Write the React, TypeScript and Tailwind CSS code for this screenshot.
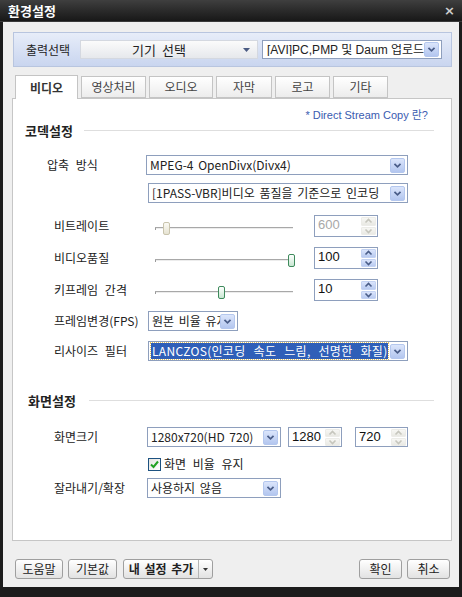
import React from "react";

const KR = "font-['Noto_Sans_CJK_KR',sans-serif]";
const LAT = "font-['Liberation_Sans','Noto_Sans_CJK_KR',sans-serif]";

function Chevron() {
  return (
    <svg width="15" height="15" viewBox="0 0 15 15">
      <polyline points="4,5.5 7.5,9 11,5.5" fill="none" stroke="#4a5d88" strokeWidth="2" />
    </svg>
  );
}

function ArrowBtn() {
  return (
    <div className="w-[15px] h-[15px] mr-[2px] shrink-0 rounded-[2px] border border-[#b4c7ee] bg-linear-to-b from-[#dbe5fb] to-[#b3c6ef] flex items-center justify-center">
      <Chevron />
    </div>
  );
}

function Select({ w, text, highlight, className = "" }: { w: string; text: string; highlight?: boolean; className?: string }) {
  return (
    <div className={`${w} h-[20px] border border-[#8e9fbd] bg-white flex items-center shrink-0 ${className}`}>
      <div className="flex-1 overflow-hidden whitespace-nowrap pl-[2px] pr-[2px] flex items-center h-full [word-spacing:2px]">
        {highlight ? (
          <span className="bg-[#2f5fb8] text-white px-[1px] h-[16px] flex items-center outline outline-1 outline-dotted outline-[#e0c060] overflow-hidden whitespace-nowrap w-[240px] [word-spacing:5px] tracking-[0.3px]">
            {text}
          </span>
        ) : (
          <span className="pl-[1px]">{text}</span>
        )}
      </div>
      <ArrowBtn />
    </div>
  );
}

function SpinArrow({ up, disabled }: { up?: boolean; disabled?: boolean }) {
  return (
    <div
      className={`flex-1 rounded-[1px] flex items-center justify-center ${
        disabled ? "bg-linear-to-b from-[#f7f7f4] to-[#e9e9e4] border border-[#ecece8]" : "bg-linear-to-b from-[#dae4fb] to-[#b9cbf1] border border-[#c3d2f2]"
      }`}
    >
      <svg width="9" height="6" viewBox="0 0 9 6">
        <polyline
          points={up ? "1.5,4.5 4.5,1.5 7.5,4.5" : "1.5,1.5 4.5,4.5 7.5,1.5"}
          fill="none"
          stroke={disabled ? "#c6c6bd" : "#4a5d88"}
          strokeWidth="1.6"
        />
      </svg>
    </div>
  );
}

function Spin({ w, value, disabled, arrowsDisabled, className = "" }: { w: string; value: string; disabled?: boolean; arrowsDisabled?: boolean; className?: string }) {
  const ad = disabled || arrowsDisabled;
  return (
    <div className={`${w} h-full border border-[#8e9fbd] bg-white flex shrink-0 ${className}`}>
      <div className={`flex-1 pl-[3px] pt-[2px] text-[13px] ${LAT} ${disabled ? "text-[#a8a8a8]" : "text-[#111]"}`}>{value}</div>
      <div className="w-[15px] flex flex-col gap-[1px] py-[1px] mr-[1px]">
        <SpinArrow up disabled={ad} />
        <SpinArrow disabled={ad} />
      </div>
    </div>
  );
}

function Slider({ pos, disabled }: { pos: string; disabled?: boolean }) {
  return (
    <div className="relative w-[138px] h-full ml-[8px] shrink-0">
      <div className="absolute left-0 right-0 top-[12px] h-[1px] bg-[#a8a8a8]" />
      <div className="absolute left-0 right-0 top-[13px] h-[1px] bg-[#ececec]" />
      <div className="absolute left-0 top-[13px] w-[1px] h-[2px] bg-[#9a9a9a]" />
      <div
        className={`absolute top-[7px] ${pos} w-[7px] h-[13px] rounded-[2px] border ${
          disabled ? "border-[#c9c4ad] bg-linear-to-b from-[#fbfaf4] to-[#e6e3d2]" : "border-[#3e8a5c] bg-linear-to-b from-[#ffffff] to-[#c7e6d1]"
        }`}
      />
    </div>
  );
}

function Btn({ w, children, bold, className = "" }: { w: string; children: React.ReactNode; bold?: boolean; className?: string }) {
  return (
    <div
      className={`${w} h-full border border-[#9f9f9f] rounded-[3px] bg-linear-to-b from-[#ffffff] to-[#e2e2e2] flex items-center justify-center text-[12px] ${
        bold ? "font-bold" : ""
      } ${className}`}
    >
      {children}
    </div>
  );
}

function Label({ children, pl = "pl-[41px]", w = "w-[134px]" }: { children: React.ReactNode; pl?: string; w?: string }) {
  return <div className={`${w} ${pl} shrink-0 text-[12px] [word-spacing:4px] whitespace-nowrap`}>{children}</div>;
}

function Tab({ w, label, active }: { w: string; label: string; active?: boolean }) {
  return (
    <div
      className={`${w} flex items-center justify-center text-[12px] border border-[#c4c4c4] ${
        active ? "h-[24px] bg-white border-b-0 font-bold text-[#333] relative z-10 -mb-px" : "h-[22px] bg-linear-to-b from-[#ffffff] to-[#ececec] text-[#444]"
      }`}
    >
      {label}
    </div>
  );
}

export default function App() {
  return (
    <div className={`w-[462px] h-[597px] bg-[#1c1c1c] flex flex-col ${KR} text-[12px] text-[#222] leading-none`}>
      {/* title bar */}
      <div className="h-[22px] shrink-0 flex items-center justify-between pl-[8px] pr-[7px] bg-linear-to-b from-[#3f3f3f] to-[#181818] border-b border-[#3a3a3a]">
        <span className="text-white font-bold text-[13px]">환경설정</span>
        <span className="text-[#d0d0d0] text-[13px] font-bold font-['DejaVu_Sans',sans-serif]">×</span>
      </div>

      {/* body */}
      <div className="mx-[3px] h-[565px] shrink-0 bg-[#efefef] flex flex-col pl-[9px] pr-[7px] pt-[10px]">
        {/* output select */}
        <div className="ml-[1px] h-[35px] shrink-0 border border-[#b8c5df] bg-linear-to-b from-[#e7edf9] to-[#c9d5ef] flex items-center pl-[12px]">
          <span className="text-[12px] w-[48px] shrink-0">출력선택</span>
          <div className="ml-[6px] w-[178px] h-[19px] shrink-0 relative border border-[#d4d8e0] bg-linear-to-b from-[#fbfbfb] to-[#e6e8ec] flex items-center justify-center text-[13px]">
            <span className="pr-[20px] [word-spacing:3px]">기기 선택</span>
            <svg className="absolute right-[7px] top-[7px]" width="7" height="4" viewBox="0 0 7 4">
              <polygon points="0,0 7,0 3.5,4" fill="#4a5a82" />
            </svg>
          </div>
          <div className="ml-[4px] w-[180px] h-[19px] shrink-0 border border-[#8e9fbd] bg-white flex items-center">
            <div className={`flex-1 overflow-hidden whitespace-nowrap pl-[4px] text-[12px] ${LAT}`}>[AVI]PC,PMP 및 Daum 업로드</div>
            <ArrowBtn />
          </div>
        </div>

        {/* tabs */}
        <div className="mt-[8px] h-[23px] shrink-0 flex items-end gap-[3px] pl-[3px]">
          <Tab w="w-[63px]" label="비디오" active />
          <Tab w="w-[65px]" label="영상처리" />
          <Tab w="w-[64px]" label="오디오" />
          <Tab w="w-[56px]" label="자막" />
          <Tab w="w-[55px]" label="로고" />
          <Tab w="w-[55px]" label="기타" />
        </div>

        {/* content panel */}
        <div className="h-[443px] shrink-0 border border-[#c6c6c6] bg-white flex flex-col">
          <div className={`mt-[9px] h-[14px] flex items-center justify-end pr-[23px] text-[11px] text-[#3a5bb0] ${LAT}`}>* Direct Stream Copy 란?</div>

          <div className="h-[16px] flex items-center pl-[12px]">
            <span className="font-bold text-[13px] text-[#222]">코덱설정</span>
            <div className="flex-1 h-[1px] bg-[#dedede] ml-[11px] mr-[17px]" />
          </div>

          <div className="mt-[17px] h-[20px] flex items-center">
            <Label pl="pl-[34px]" w="w-[133px]">압축 방식</Label>
            <Select w="w-[262px]" text="MPEG-4 OpenDivx(Divx4)" />
          </div>
          <div className="mt-[8px] h-[20px] flex items-center">
            <div className="w-[135px] shrink-0" />
            <Select w="w-[260px]" text="[1PASS-VBR]비디오 품질을 기준으로 인코딩" />
          </div>

          <div className="mt-[12px] h-[22px] flex items-center">
            <Label>비트레이트</Label>
            <Slider pos="left-[8px]" disabled />
            <Spin w="w-[64px]" value="600" disabled className="ml-[21px]" />
          </div>
          <div className="mt-[10px] h-[22px] flex items-center">
            <Label>비디오품질</Label>
            <Slider pos="left-[133px]" />
            <Spin w="w-[64px]" value="100" className="ml-[21px]" />
          </div>
          <div className="mt-[10px] h-[22px] flex items-center">
            <Label>키프레임 간격</Label>
            <Slider pos="left-[63px]" />
            <Spin w="w-[64px]" value="10" className="ml-[21px]" />
          </div>

          <div className="mt-[10px] h-[20px] flex items-center">
            <Label w="w-[135px]">프레임변경(FPS)</Label>
            <Select w="w-[90px]" text="원본 비율 유지" />
          </div>
          <div className="mt-[10px] h-[20px] flex items-center">
            <Label w="w-[135px]">리사이즈 필터</Label>
            <Select w="w-[260px]" text="LANCZOS(인코딩 속도 느림, 선명한 화질)" highlight />
          </div>

          <div className="mt-[31px] h-[16px] flex items-center pl-[15px]">
            <span className="font-bold text-[13px] text-[#222]">화면설정</span>
            <div className="flex-1 h-[1px] bg-[#dedede] ml-[13px] mr-[17px]" />
          </div>

          <div className="mt-[19px] h-[20px] flex items-center">
            <Label>화면크기</Label>
            <Select w="w-[134px]" text="1280x720(HD 720)" />
            <Spin w="w-[54px]" value="1280" arrowsDisabled className="ml-[7px]" />
            <Spin w="w-[53px]" value="720" arrowsDisabled className="ml-[13px]" />
          </div>

          <div className="mt-[10px] h-[14px] flex items-center pl-[135px]">
            <div className="w-[13px] h-[13px] border border-[#1d5281] bg-linear-to-br from-[#e4e4df] to-[#ffffff] flex items-center justify-center shrink-0">
              <svg width="9" height="9" viewBox="0 0 9 9">
                <polyline points="1,4.5 3.5,7 8,1.5" fill="none" stroke="#21a121" strokeWidth="2" />
              </svg>
            </div>
            <span className="ml-[3px] text-[12px] [word-spacing:4px]">화면 비율 유지</span>
          </div>

          <div className="mt-[7px] h-[20px] flex items-center">
            <Label>잘라내기/확장</Label>
            <Select w="w-[134px]" text="사용하지 않음" />
          </div>
        </div>

        {/* buttons */}
        <div className="mt-[18px] h-[20px] shrink-0 flex items-stretch pl-[3px] pr-[2px]">
          <Btn w="w-[48px]">도움말</Btn>
          <Btn w="w-[49px]" className="ml-[5px]">기본값</Btn>
          <div className="ml-[6px] w-[90px] h-full border border-[#9f9f9f] rounded-[3px] bg-linear-to-b from-[#ffffff] to-[#e2e2e2] flex">
            <div className="w-[75px] flex items-center justify-center font-bold text-[12px] border-r border-[#b5b5b5] [word-spacing:2px]">내 설정 추가</div>
            <div className="flex-1 flex items-center justify-center">
              <svg width="5" height="3" viewBox="0 0 5 3">
                <polygon points="0,0 5,0 2.5,3" fill="#333" />
              </svg>
            </div>
          </div>
          <div className="flex-1" />
          <Btn w="w-[43px]">확인</Btn>
          <Btn w="w-[43px]" className="ml-[5px]">취소</Btn>
        </div>
      </div>
    </div>
  );
}
